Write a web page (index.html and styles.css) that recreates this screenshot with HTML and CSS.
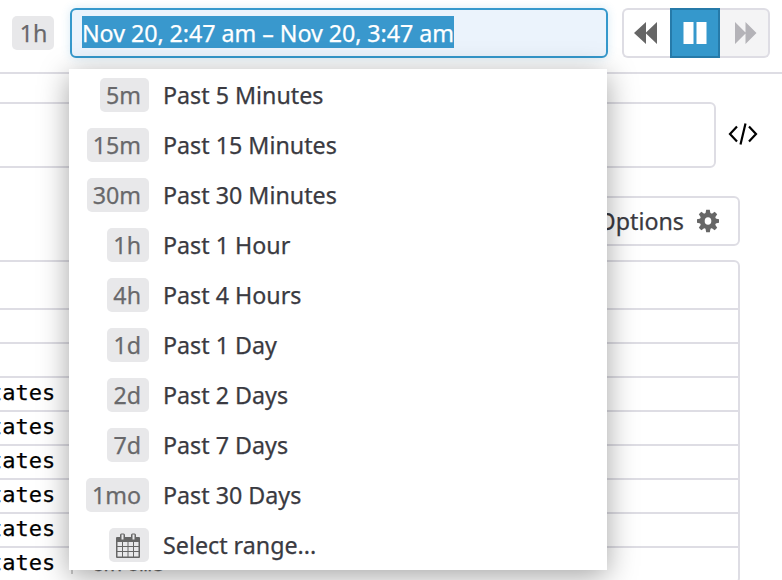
FILE: index.html
```html
<!DOCTYPE html>
<html lang="en">
<head>
<meta charset="utf-8">
<title>Log Explorer</title>
<link rel="stylesheet" href="styles.css">
</head>
<body>
<header class="topbar">
  <span class="badge">1h</span>
  <div class="picker">
    <div class="field"><span class="selected">Nov 20, 2:47 am – Nov 20, 3:47 am</span></div>
    <ul class="menu">
      <li><span class="key"><span class="badge">5m</span></span><span class="label">Past 5 Minutes</span></li>
      <li><span class="key"><span class="badge">15m</span></span><span class="label">Past 15 Minutes</span></li>
      <li><span class="key"><span class="badge">30m</span></span><span class="label">Past 30 Minutes</span></li>
      <li><span class="key"><span class="badge">1h</span></span><span class="label">Past 1 Hour</span></li>
      <li><span class="key"><span class="badge">4h</span></span><span class="label">Past 4 Hours</span></li>
      <li><span class="key"><span class="badge">1d</span></span><span class="label">Past 1 Day</span></li>
      <li><span class="key"><span class="badge">2d</span></span><span class="label">Past 2 Days</span></li>
      <li><span class="key"><span class="badge">7d</span></span><span class="label">Past 7 Days</span></li>
      <li><span class="key"><span class="badge">1mo</span></span><span class="label">Past 30 Days</span></li>
      <li><span class="key"><span class="badge icon-badge"><svg width="24" height="26" viewBox="0 0 24 26"><path fill="#666" fill-rule="evenodd" d="M1 4h3V2q0-1.500 1.500-1.500h2Q9 .5 9 2v2h6V2q0-1.500 1.500-1.500h2Q20 .5 20 2v2h3q1 0 1 1v19q0 1-1 1H1q-1 0-1-1V5q0-1 1-1zM5.500 1.500v5h2v-5zM16.500 1.500v5h2v-5zM1.500 9v4H6V9zM7 9v4h4.500V9zM12.500 9v4H17V9zM18 9v4h4.500V9zM1.500 14v4H6v-4zM7 14v4h4.500v-4zM12.500 14v4H17v-4zM18 14v4h4.500v-4zM1.500 19v4.500H6V19zM7 19v4.500h4.500V19zM12.500 19v4.500H17V19zM18 19v4.500h4.500V19z"/></svg></span></span><span class="label">Select range...</span></li>
    </ul>
  </div>
  <div class="controls">
    <button class="back" aria-label="Back"><svg width="24" height="24" viewBox="0 0 24 24"><path fill="#666" d="M12 1v22L0 12zM23 1v22L11.500 12z"/></svg></button>
    <button class="pause" aria-label="Pause"><svg width="24" height="24" viewBox="0 0 24 24"><path fill="#fff" d="M.5 1h10v22H.5zM13.500 1h10v22h-10z"/></svg></button>
    <button class="forward" aria-label="Forward"><svg width="24" height="24" viewBox="0 0 24 24"><path fill="#b4b3b8" d="M1 1v22l11-11zM11.500 1v22l11-11z"/></svg></button>
  </div>
</header>
<main>
  <div class="search-row">
    <div class="search"></div>
    <svg class="code" width="30" height="24" viewBox="0 0 30 24" fill="none" stroke="#000" stroke-width="2.200"><path d="M9 4.500 2 12l7 7.500M21 4.500l7 7.500-7 7.500M17.500 1.500l-5 21"/></svg>
  </div>
  <div class="toolbar">
    <button class="options">Options
      <svg width="22" height="24" viewBox="-11 -12 22 24"><g fill="#666"><path id="t" d="M-2.500-7.500-1.800-11.200h3.600l.7 3.700v15l-.7 3.700h-3.600l-.7-3.700z"/><use href="#t" transform="rotate(45)"/><use href="#t" transform="rotate(90)"/><use href="#t" transform="rotate(135)"/><circle r="8.200"/></g><ellipse rx="3.300" ry="3.800" fill="#fff"/></svg>
    </button>
  </div>
  <div class="table">
    <div class="row head"></div>
    <div class="row"></div>
    <div class="row"></div>
    <div class="row"><span class="cell">tates</span></div>
    <div class="row"><span class="cell">tates</span></div>
    <div class="row"><span class="cell">tates</span></div>
    <div class="row"><span class="cell">tates</span></div>
    <div class="row"><span class="cell">tates</span></div>
    <div class="row last"><span class="cell">tates</span><span class="tag">chrome</span></div>
  </div>
</main>
</body>
</html>
```
FILE: styles.css
```css
* { box-sizing: border-box; }

body {
  margin: 0;
  height: 580px;
  overflow: hidden;
  background: #fff;
  color: #3a3a41;
  font: 23.25px/34px "Noto Sans", sans-serif;
  -webkit-text-stroke: .25px currentColor;
}

svg { display: block; flex: none; }

.topbar {
  display: flex;
  align-items: flex-start;
  height: 74px;
  padding: 8px 12px 0;
  border-bottom: 2px solid #dedde4;
}

.badge {
  height: 34px;
  padding: 0 8px 0 6px;
  border-radius: 5px;
  background: #e8e8ea;
  color: #68686b;
}

.topbar > .badge {
  width: 42px;
  margin: 8px 16px 0 0;
  padding: 0 0 0 1px;
  text-align: center;
}

.picker { position: relative; width: 538px; }

.field {
  display: flex;
  align-items: center;
  height: 50px;
  padding: 0 10px 2px;
  border: 2px solid #3598cc;
  border-radius: 6px;
  background: #ebf3fc;
  box-shadow: 0 0 10px rgba(53, 152, 204, .2);
}

.selected {
  height: 32px;
  background: #3998cd;
  color: #fff;
  letter-spacing: -.05px;
  line-height: 34px;
  white-space: nowrap;
}

.menu {
  position: absolute;
  top: 61px;
  left: -1px;
  z-index: 2;
  width: 538px;
  margin: 0;
  padding: 1px 0 0;
  background: #fff;
  box-shadow: 0 6px 28px rgba(0, 0, 0, .36);
  list-style: none;
}

.menu li {
  display: flex;
  align-items: center;
  gap: 14px;
  height: 50px;
}

.key {
  display: flex;
  justify-content: flex-end;
  width: 80px;
}

.icon-badge { padding: 5px 9px 0 7px; }

.controls { display: flex; margin-left: 14px; }

.controls button {
  display: flex;
  align-items: center;
  justify-content: center;
  width: 50px;
  height: 50px;
  padding: 0 0 1px;
  border: 2px solid #dedde4;
  background: #fff;
}

.controls .back {
  width: 48px;
  padding-right: 3px;
  border-right: 0;
  border-radius: 6px 0 0 6px;
}

.controls .pause { border-color: #267aa9; background: #3598cc; }

.controls .forward {
  padding-left: 4px;
  border-left: 0;
  border-radius: 0 6px 6px 0;
  background: #f4f4f5;
}

.search-row {
  display: flex;
  align-items: center;
  gap: 12px;
  padding-top: 28px;
}

.search {
  width: 736px;
  height: 66px;
  margin-left: -20px;
  border: 2px solid #dedde4;
  border-radius: 6px;
}

.code { margin-bottom: 2px; }

.toolbar {
  display: flex;
  justify-content: flex-end;
  padding: 28px 42px 14px 0;
}

.options {
  display: flex;
  align-items: center;
  gap: 13px;
  height: 50px;
  padding: 0 19px;
  border: 2px solid #dedde4;
  border-radius: 6px;
  background: #fff;
  color: #3a3a41;
  font: inherit;
}

.table {
  width: 760px;
  margin-left: -20px;
  border: 2px solid #dedde4;
  border-radius: 6px;
  color: #000;
  font: 22px/30px "DejaVu Sans Mono", monospace;
}

.row {
  display: flex;
  height: 34px;
  padding-left: 7px;
  border-bottom: 2px solid #dedde4;
}

.head { height: 48px; }

.tag {
  height: 26px;
  margin-left: 16px;
  padding-left: 18px;
  border-left: 2px solid #ccc;
  color: #666;
  font-size: 20px;
  line-height: 32px;
}
```
